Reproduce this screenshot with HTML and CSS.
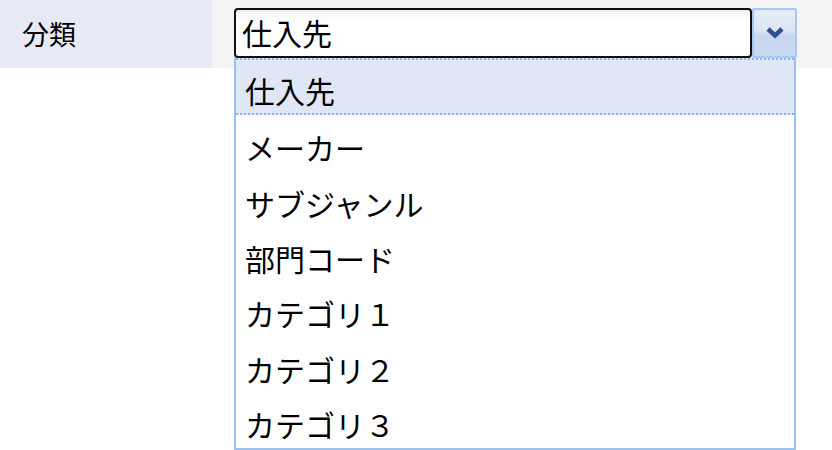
FILE: index.html
```html
<!DOCTYPE html>
<html lang="ja">
<head>
<meta charset="utf-8">
<link rel="stylesheet" href="styles.css">
</head>
<body>
<div class="page">
<div class="row">
  <div class="label">分類</div>
  <div class="value">
    <div class="combo">
      <div class="field">仕入先</div>
      <div class="btn">
        <svg width="20" height="12" viewBox="0 0 20 12"><path d="M3 2 L10 8.5 L17 2" fill="none" stroke="#2f4f8f" stroke-width="4.5" stroke-linejoin="miter"/></svg>
      </div>
      <ul class="list">
        <li class="item active">仕入先</li>
        <li class="item">メーカー</li>
        <li class="item">サブジャンル</li>
        <li class="item">部門コード</li>
        <li class="item">カテゴリ１</li>
        <li class="item">カテゴリ２</li>
        <li class="item">カテゴリ３</li>
      </ul>
    </div>
  </div>
</div>
</div>
</body>
</html>
```

FILE: styles.css
```css
html, body {
  margin: 0;
  padding: 0;
  background: #ffffff;
  font-family: "Noto Sans CJK JP", "Noto Sans", sans-serif;
  color: #000;
}
.page {
  min-height: 450px;
}
.row {
  display: flex;
  height: 68px;
}
.label {
  width: 212px;
  background: #e7e9f5;
  font-size: 27px;
  line-height: 68px;
  padding-left: 22px;
  box-sizing: border-box;
}
.value {
  flex: 1;
  background: #f4f4f4;
  padding: 8px 0 0 22px;
}
.combo {
  position: relative;
  display: flex;
  width: 563px;
  height: 50px;
}
.field {
  width: 518px;
  height: 50px;
  box-sizing: border-box;
  border: 2px solid #111;
  border-radius: 4px;
  background: linear-gradient(#eef0f0 0, #ffffff 10px, #ffffff 100%);
  font-size: 30px;
  line-height: 44px;
  padding-left: 6px;
}
.btn {
  width: 45px;
  height: 50px;
  box-sizing: border-box;
  border: 2px solid #a7c6f2;
  border-radius: 2px;
  background: linear-gradient(#e6edf8 0, #dbe5f5 45%, #c7d7ef 55%, #c9d9f0 100%);
  display: flex;
  align-items: center;
  justify-content: center;
}
.list {
  position: absolute;
  z-index: 10;
  top: 50px;
  left: 0;
  width: 562px;
  height: 392px;
  box-sizing: border-box;
  margin: 0;
  padding: 0;
  list-style: none;
  background: #fff;
  border: 2px solid #9cc0f0;
  border-top: none;
  display: flex;
  flex-direction: column;
}
.item {
  flex: 1;
  font-size: 30px;
  padding: 8px 0 0 9px;
  box-sizing: border-box;
  display: flex;
  align-items: center;
}
.item.active {
  background: #dfe7f6;
  border-top: 2px dotted #8fb3ea;
  border-bottom: 2px dotted #8fb3ea;
  padding-top: 6px;
}
```
